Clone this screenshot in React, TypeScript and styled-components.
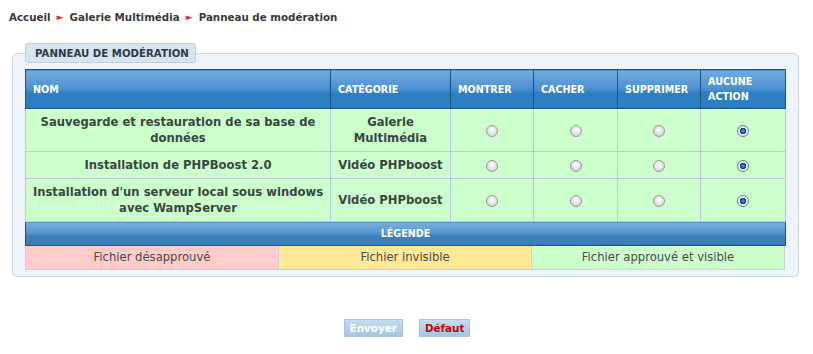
import React from "react";
import styled, { createGlobalStyle } from "styled-components";

const GlobalStyle = createGlobalStyle`
  body {
    margin: 0;
    background: #ffffff;
    font-family: "DejaVu Sans", Verdana, sans-serif;
    font-size: 11px;
    color: #3e3e3e;
  }
`;

const Page = styled.div`
  width: 813px;
  padding-top: 9px;
`;

const Breadcrumb = styled.div`
  display: flex;
  align-items: center;
  gap: 6px;
  padding-left: 9px;
  height: 15px;
  font-size: 10.3px;
  font-weight: bold;
  color: #3a3a3a;
`;

const Arrow = styled.span`
  color: #d63a2c;
  font-size: 9px;
`;

const Panel = styled.fieldset`
  margin: 19px 0 0 12px;
  width: 786px;
  box-sizing: border-box;
  padding: 6px 12px 6px;
  border: 1px solid #cdd6e0;
  border-radius: 5px;
  background: #eef4fa;
`;

const PanelTitle = styled.legend`
  margin: 0;
  padding: 0 9px;
  height: 20px;
  width: 171px;
  box-sizing: border-box;
  white-space: nowrap;
  line-height: 19px;
  border: 1px solid #bfcfdf;
  border-radius: 3px;
  background: #d6e4f1;
  font-weight: bold;
  font-size: 10.2px;
  color: #2f3a44;
`;

const Table = styled.table`
  width: 760px;
  border-collapse: collapse;
  table-layout: fixed;
`;

const HeadCell = styled.th<{ $w: number }>`
  width: ${(p) => p.$w}px;
  height: 39px;
  padding: 0 7px;
  box-sizing: border-box;
  text-align: left;
  font-size: 9.6px;
  line-height: 15px;
  color: #ffffff;
  border: 1px solid #1f5584;
  background: linear-gradient(#74aade 0%, #4e93d2 45%, #3d88ca 55%, #2f7fc4 56%, #2c7cc2 100%);
`;

const Cell = styled.td`
  padding: 5px 6px;
  text-align: center;
  font-size: 11.6px;
  font-weight: bold;
  line-height: 16px;
  color: #374840;
  background: #ccffcc;
  border: 1px solid #b9cbd9;
`;

const LegendHead = styled.th`
  height: 23px;
  padding: 0;
  font-size: 9.6px;
  color: #ffffff;
  border: 1px solid #1f5584;
  background: linear-gradient(#7ab0de 0%, #5597d0 45%, #4185bf 55%, #3c80b9 56%, #3b7fb8 100%);
`;

const LegendRow = styled.div`
  display: grid;
  grid-template-columns: 253px 253px 254px;
`;

const LegendCell = styled.div<{ $bg: string }>`
  height: 23px;
  line-height: 23px;
  text-align: center;
  font-size: 11.6px;
  color: #4a4a4a;
  background: ${(p) => p.$bg};
  border-bottom: 1px solid #c6d3dc;
  border-left: 1px solid #c6d3dc;
  &:last-child {
    border-right: 1px solid #c6d3dc;
  }
`;

const Radio = styled.input.attrs({ type: "radio" })`
  appearance: none;
  margin: 0;
  width: 12px;
  height: 12px;
  border-radius: 50%;
  border: 1px solid #9a9a9a;
  background: radial-gradient(circle at 50% 40%, #ffffff 0%, #e6e6e6 45%, #c4c4c4 100%);
  vertical-align: middle;
  &:checked {
    border-color: #6c7e8c;
    background: radial-gradient(circle, #4aa3e0 0%, #0f5aa0 32%, #0a3e72 42%, #f2f2f2 48%, #d0d0d0 100%);
  }
`;

const Actions = styled.div`
  display: flex;
  justify-content: center;
  gap: 16px;
  margin-top: 42px;
  padding-left: 1px;
`;

const Button = styled.button<{ $red?: boolean }>`
  height: 18px;
  padding: 0 5px;
  font-family: "DejaVu Sans", Verdana, sans-serif;
  font-size: 10.4px;
  font-weight: bold;
  color: ${(p) => (p.$red ? "#cc0000" : "#ffffff")};
  border: 1px solid #a9c6de;
  background: linear-gradient(#c4dcef, #a3c6e4);
  cursor: pointer;
`;

const rows = [
  { name: "Sauvegarde et restauration de sa base de données", cat: "Galerie Multimédia" },
  { name: "Installation de PHPBoost 2.0", cat: "Vidéo PHPboost" },
  { name: "Installation d'un serveur local sous windows avec WampServer", cat: "Vidéo PHPboost" },
];

const columns: [string, number][] = [
  ["NOM", 305],
  ["CATÉGORIE", 120],
  ["MONTRER", 83],
  ["CACHER", 84],
  ["SUPPRIMER", 83],
  ["AUCUNE ACTION", 85],
];

export default function App() {
  return (
    <Page>
      <GlobalStyle />
      <Breadcrumb>
        <span>Accueil</span>
        <Arrow>►</Arrow>
        <span>Galerie Multimédia</span>
        <Arrow>►</Arrow>
        <span>Panneau de modération</span>
      </Breadcrumb>
      <Panel>
        <PanelTitle>PANNEAU DE MODÉRATION</PanelTitle>
        <Table>
          <thead>
            <tr>
              {columns.map(([label, w]) => (
                <HeadCell key={label} $w={w}>{label}</HeadCell>
              ))}
            </tr>
          </thead>
          <tbody>
            {rows.map((r, i) => (
              <tr key={i}>
                <Cell>{r.name}</Cell>
                <Cell>{r.cat}</Cell>
                {["show", "hide", "del", "none"].map((a) => (
                  <Cell key={a}>
                    <Radio name={`action${i}`} defaultChecked={a === "none"} />
                  </Cell>
                ))}
              </tr>
            ))}
            <tr>
              <LegendHead colSpan={6}>LÉGENDE</LegendHead>
            </tr>
          </tbody>
        </Table>
        <LegendRow>
          <LegendCell $bg="#ffcccc">Fichier désapprouvé</LegendCell>
          <LegendCell $bg="#ffe997">Fichier invisible</LegendCell>
          <LegendCell $bg="#ccffcc">Fichier approuvé et visible</LegendCell>
        </LegendRow>
      </Panel>
      <Actions>
        <Button>Envoyer</Button>
        <Button $red>Défaut</Button>
      </Actions>
    </Page>
  );
}
